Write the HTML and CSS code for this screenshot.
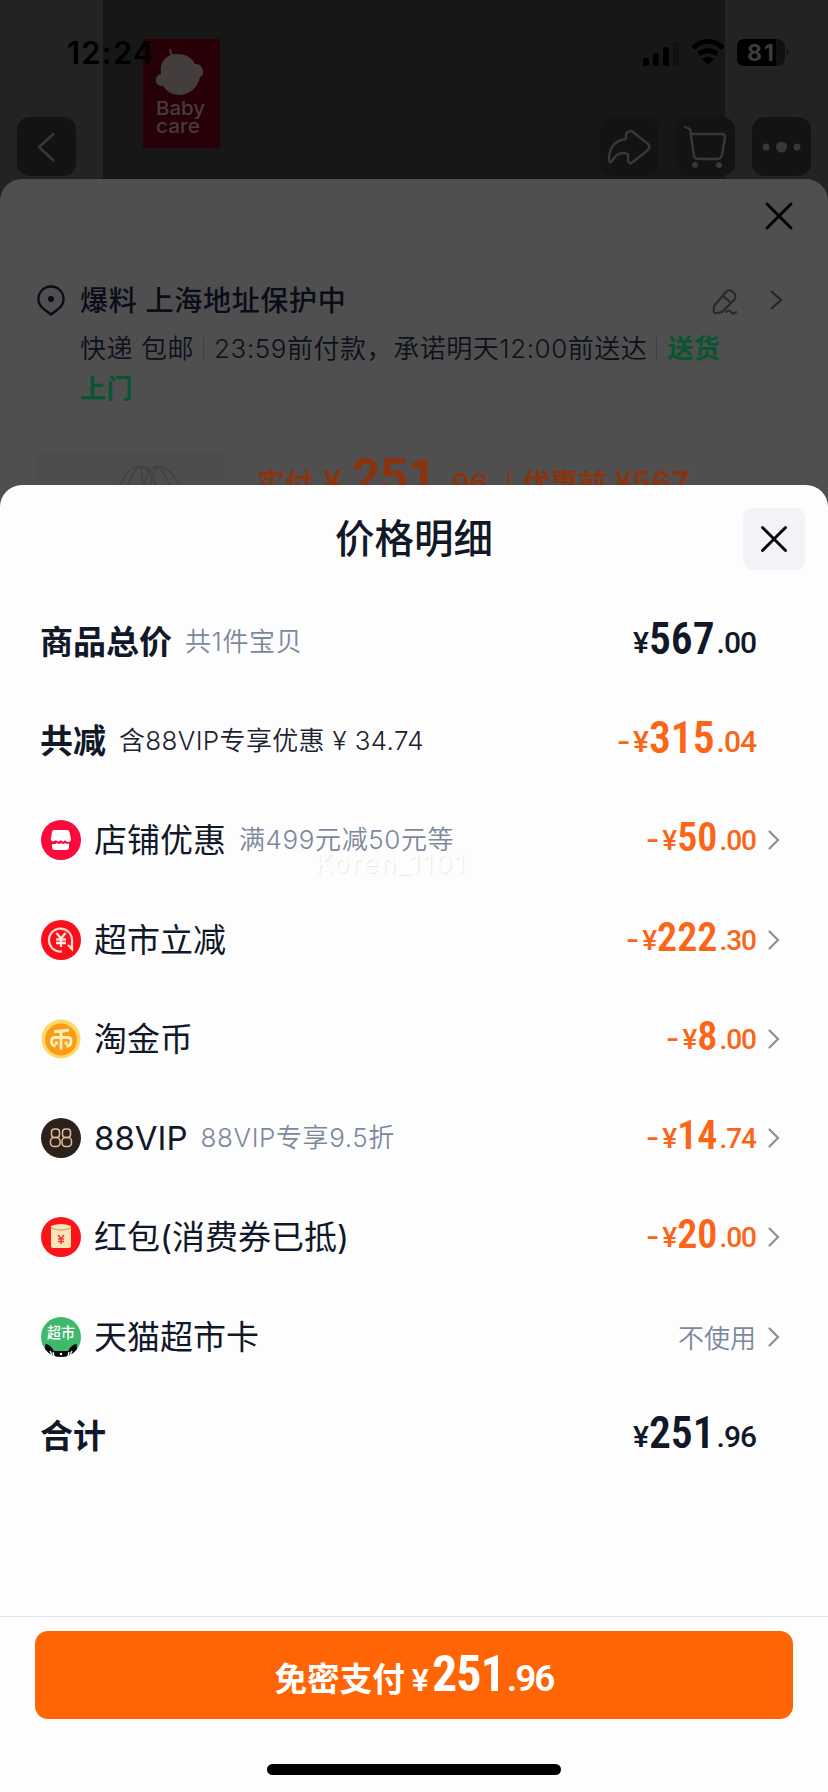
FILE: index.html
```html
<!DOCTYPE html>
<html lang="zh-CN">
<head>
<meta charset="utf-8">
<title>价格明细</title>
<link rel="stylesheet" href="styles.css">
</head>
<body>
<main class="phone">
  <section class="product">
    <div class="photo"></div>
    <div class="brand">
      <svg width="77" height="109" viewBox="0 0 77 109">
        <rect width="77" height="109" fill="#280008"/>
        <path d="M27 10c0 5 3 7 4 10" fill="none" stroke="#433d3d" stroke-width="1.8"/>
        <path d="M24 18C31 13 47 14 52 25C60 24 63 36 57 38C55 51 41 59 30 55C24 53 22 49 20 47C12 48 10 37 18 35C17 27 19 22 24 18Z" fill="#433d3d"/>
        <text class="brand-word" x="13" y="76" textLength="49" lengthAdjust="spacingAndGlyphs">Baby</text>
        <text class="brand-word" x="13" y="94" textLength="44" lengthAdjust="spacingAndGlyphs">care</text>
      </svg>
    </div>
    <header class="status">
      <span class="clock">12:24</span>
      <span class="signals">
        <svg width="36" height="20" viewBox="0 0 36 20"><g fill="#000"><rect y="12" width="6" height="8" rx="1.5"/><rect x="10" y="7" width="6" height="13" rx="1.5"/><rect x="20" y="1" width="6" height="19" rx="1.5"/></g><rect x="30" y="-4" width="6" height="24" rx="1.5" fill="#111"/></svg>
        <svg width="34" height="26" viewBox="0 0 34 26"><g fill="none" stroke="#000" stroke-width="5"><path d="M2 9Q17-4 32 9"/><path d="M8 15Q17 8 26 15"/></g><path d="M11 20Q17 15 23 20L17 26Z"/></svg>
        <svg width="53" height="27" viewBox="0 0 53 27"><rect width="48" height="27" rx="8" fill="#111"/><path d="M8 0H39V27H8Q0 27 0 19V8Q0 0 8 0Z"/><path d="M50 10Q53 13.500 50 17Z" fill="#111"/><text class="battery" x="10" y="22" textLength="27">81</text></svg>
      </span>
    </header>
    <nav class="tools">
      <span class="tool"><svg width="59" height="59" viewBox="0 0 59 59"><path d="M36.500 17L22 30L36.500 43.500"/></svg></span>
      <span class="tool-group">
        <span class="tool"><svg width="59" height="59" viewBox="0 0 59 59"><path d="M29 15Q30 13 33 15L48 27Q51 30 48 33L33 45Q30 48 28 44V37Q18 33 12 44Q9 48 9 41Q10 24 26 22V18Q26 15 29 15Z"/></svg></span>
        <span class="tool"><svg width="59" height="59" viewBox="0 0 59 59"><path d="M9 10L14 12L18 39Q19 42 22 42H42Q45 42 46 38L49 20Q49 17 46 17H17"/><circle class="solid" cx="19" cy="48" r="3"/><circle class="solid" cx="43" cy="48" r="3"/></svg></span>
        <span class="tool"><svg width="59" height="59" viewBox="0 0 59 59"><g class="solid"><circle cx="14" cy="30" r="3.500"/><circle cx="29.500" cy="30" r="5.500"/><circle cx="45" cy="30" r="3.500"/></g></svg></span>
      </span>
    </nav>
  </section>

  <section class="order">
    <svg class="order-close" width="28" height="28" viewBox="0 0 28 28"><path d="M2 2L26 26M26 2L2 26" stroke="#000" stroke-width="2.800" stroke-linecap="round"/></svg>
    <div class="address">
      <svg class="pin" width="28" height="32" viewBox="0 0 28 32"><path d="M8 25Q1 20 1.500 13.500A12.500 12 0 0 1 26.500 13.500Q27 20 20 25L14 29.500Z" fill="none" stroke="#0a0c18" stroke-width="2.300" stroke-linejoin="round"/><circle cx="14" cy="14" r="3" fill="#0a0c18"/></svg>
      <div class="address-body">
        <h2 class="address-name">爆料 上海地址保护中</h2>
        <p class="delivery">快递 包邮<i class="bar"></i>23:59前付款，承诺明天12:00前送达<i class="bar"></i><b>送货</b><br><b>上门</b></p>
      </div>
      <svg class="pen" width="26" height="28" viewBox="0 0 26 28"><g fill="none" stroke="#26272c" stroke-width="2" stroke-linejoin="round" stroke-linecap="round"><path d="M2 18L14 4Q17 1 20 3L22 5Q25 8 22 12L10 24Q8 25 3 25Q1 25 2 18ZM11 8L18 14"/><path d="M14 24Q17 21 19 24T24 24"/></g></svg>
      <svg class="go" width="14" height="22" viewBox="0 0 14 22"><path d="M2 2L12 11L2 20" fill="none" stroke="#26272c" stroke-width="2.300"/></svg>
    </div>
    <div class="goods">
      <div class="thumb"><svg width="72" height="36" viewBox="0 0 72 36"><g fill="none" stroke="#414141" stroke-width="1.500"><path d="M2 36Q10 2 26 2Q40 5 46 36M10 36Q18 5 26 2Q30 12 28 36M29 36Q31 3 44 2Q63 5 70 36M44 2Q34 14 37 36M44 2Q56 13 58 36M26 2Q34 2 37 8"/></g></svg></div>
      <p class="pay"><span>实付</span><span class="pay-yen">¥</span><span class="pay-main">251</span><span class="pay-cents">.96</span><span class="pay-sep">|</span><span>优惠前</span><span class="pay-before">¥567</span></p>
    </div>
  </section>

  <section class="detail">
    <header class="detail-head">
      <h1 class="title">价格明细</h1>
      <span class="close"><svg width="28" height="28" viewBox="0 0 28 28"><path d="M2.500 2.500L25.500 25.500M25.500 2.500L2.500 25.500" stroke="#05070d" stroke-width="3" stroke-linecap="round"/></svg></span>
    </header>
    <div class="rows">
      <div class="row strong"><span class="label">商品总价</span><span class="note">共1件宝贝</span><span class="price"><span class="yen">¥</span><span class="num">567</span><span class="cents">.00</span></span></div>
      <div class="row strong"><span class="label">共减</span><span class="note dark">含88VIP专享优惠 ¥ 34.74</span><span class="price off"><span class="minus">-</span><span class="yen">¥</span><span class="num">315</span><span class="cents">.04</span></span></div>
      <div class="row">
        <svg class="icon" width="40" height="40" viewBox="0 0 40 40"><circle cx="20" cy="20" r="20" fill="#fb0a3b"/><path d="M13 10H26Q28 10 28.500 12L30 19Q30 22 27 22Q25 22 24 20Q22 23 20 20Q17 23 15 20Q13 22 11 21Q9 20 10 18L11 12Q11 10 13 10Z" fill="#fff"/><path d="M11 24Q14 25 16 23Q18 25 20 23Q22 25 24 23Q27 25 28 23V27Q28 30 25 30H14Q11 30 11 27Z" fill="#fff"/></svg>
        <span class="label">店铺优惠</span><span class="note">满499元减50元等</span><span class="price off"><span class="minus">-</span><span class="yen">¥</span><span class="num">50</span><span class="cents">.00</span></span><svg class="arrow" width="12" height="20" viewBox="0 0 12 20"><path d="M1.500 1.500L10 10L1.500 18.500"/></svg>
      </div>
      <div class="row">
        <svg class="icon" width="40" height="40" viewBox="0 0 40 40"><circle cx="20" cy="20" r="20" fill="#fb1019"/><path d="M21 31.500A11.500 11.500 0 1 1 31 20V29L27 25" fill="none" stroke="#ffd9d5" stroke-width="2.200"/><path d="M15.500 13L20 18.500L24.500 13M20 18V27M15 19.500H25M15 23H25" fill="none" stroke="#ffe8df" stroke-width="2.300"/><path d="M26 25L31 30V26Z" fill="#ffe2b0"/></svg>
        <span class="label">超市立减</span><span class="price off"><span class="minus">-</span><span class="yen">¥</span><span class="num">222</span><span class="cents">.30</span></span><svg class="arrow" width="12" height="20" viewBox="0 0 12 20"><path d="M1.500 1.500L10 10L1.500 18.500"/></svg>
      </div>
      <div class="row">
        <svg class="icon" width="40" height="40" viewBox="0 0 40 40"><circle cx="20" cy="20" r="19.500" fill="#ffd866"/><circle cx="20" cy="20.500" r="16" fill="#fc9b17"/><path d="M13 12.500Q20 12.500 28 11M14.500 27Q10 26.500 10.500 21.500Q11 18.500 14 18.500H27Q30.500 18.500 30 23Q29.500 27 25.500 27M15.500 22.500V25.500M25 22.500V25.500M20 13V30.500" fill="none" stroke="#fff0b8" stroke-width="2.900" stroke-linejoin="round"/></svg>
        <span class="label">淘金币</span><span class="price off"><span class="minus">-</span><span class="yen">¥</span><span class="num">8</span><span class="cents">.00</span></span><svg class="arrow" width="12" height="20" viewBox="0 0 12 20"><path d="M1.500 1.500L10 10L1.500 18.500"/></svg>
      </div>
      <div class="row">
        <svg class="icon" width="40" height="40" viewBox="0 0 40 40"><circle cx="20" cy="20" r="20" fill="#2b211d"/><g fill="none" stroke="#e3bd96" stroke-width="1.500"><rect x="10.500" y="11" width="8" height="8.500" rx="3"/><rect x="9.500" y="19.500" width="9.500" height="9" rx="3.500"/><rect x="21.500" y="11" width="8" height="8.500" rx="3"/><rect x="21" y="19.500" width="9.500" height="9" rx="3.500"/></g></svg>
        <span class="label">88VIP</span><span class="note">88VIP专享9.5折</span><span class="price off"><span class="minus">-</span><span class="yen">¥</span><span class="num">14</span><span class="cents">.74</span></span><svg class="arrow" width="12" height="20" viewBox="0 0 12 20"><path d="M1.500 1.500L10 10L1.500 18.500"/></svg>
      </div>
      <div class="row">
        <svg class="icon" width="40" height="40" viewBox="0 0 40 40"><circle cx="20" cy="20" r="20" fill="#fb1519"/><path d="M10 9Q20 5 30 9V29Q30 31 28 31H12Q10 31 10 29Z" fill="#fbe4b6"/><path d="M10 11Q20 15 30 11" fill="none" stroke="#e6a783" stroke-width="1.500"/><path d="M17 18L20 21.500L23 18M20 21V27M17 22H23M17 24.500H23" fill="none" stroke="#ec3c31" stroke-width="1.500"/></svg>
        <span class="label">红包(消费券已抵)</span><span class="price off"><span class="minus">-</span><span class="yen">¥</span><span class="num">20</span><span class="cents">.00</span></span><svg class="arrow" width="12" height="20" viewBox="0 0 12 20"><path d="M1.500 1.500L10 10L1.500 18.500"/></svg>
      </div>
      <div class="row">
        <svg class="icon" width="40" height="40" viewBox="0 0 40 40"><circle cx="20" cy="20" r="20" fill="#3eb86a"/><path d="M4.500 27Q9 27 13 34H27Q31 27 35.500 27L36 32Q30 40 20 40Q10 40 4 32Z" fill="#050807"/><path d="M9 34L11 38M31 34L29 38M12 35L13 39M28 35L27 39" stroke="#fff" stroke-width="1.300"/><circle cx="20" cy="37" r="1.200" fill="#fff"/><text class="market" x="6" y="20.500" textLength="28" lengthAdjust="spacingAndGlyphs">超市</text></svg>
        <span class="label">天猫超市卡</span><span class="unused">不使用</span><svg class="arrow" width="12" height="20" viewBox="0 0 12 20"><path d="M1.500 1.500L10 10L1.500 18.500"/></svg>
      </div>
      <div class="row strong"><span class="label">合计</span><span class="price"><span class="yen">¥</span><span class="num">251</span><span class="cents">.96</span></span></div>
    </div>
    <span class="watermark">Koren_1101</span>
    <footer class="foot">
      <div class="submit"><span class="submit-label">免密支付</span><span class="submit-yen">¥</span><span class="submit-num">251</span><span class="submit-cents">.96</span></div>
      <div class="home"></div>
    </footer>
  </section>
</main>
</body>
</html>
```
FILE: styles.css
```css
* { box-sizing: border-box; }
body { margin: 0; font-family: Inter, "Noto Sans CJK SC", sans-serif; background: #232323; }
h1, h2, p { margin: 0; }
svg { display: block; flex: none; overflow: visible; }
.phone { position: relative; width: 828px; height: 1792px; overflow: hidden; }

.product { position: relative; height: 220px; background: #232323; }
.photo { position: absolute; left: 103px; top: 0; width: 622px; height: 220px; background: #171717; }
.brand { position: absolute; left: 143px; top: 39px; }
.brand-word { font: 500 19px Inter, sans-serif; fill: #443c3c; }
.status { position: relative; display: flex; justify-content: space-between; height: 117px; padding: 34px 38px 0 67px; }
.clock { font-size: 31px; font-weight: 600; line-height: 38px; letter-spacing: 1.2px; color: #000; }
.signals { display: flex; align-items: flex-start; padding-top: 5px; }
.signals svg:nth-child(1) { margin: 7px 12px 0 0; }
.signals svg:nth-child(2) { margin: 0 12px 0 0; }
.battery { font: 700 23px Inter, sans-serif; fill: #3c3c3c; }
.tools { position: relative; display: flex; justify-content: space-between; padding: 0 17px; }
.tool-group { display: flex; gap: 17px; }
.tool { width: 59px; height: 59px; border-radius: 13px; background: #131316; }
.tool path { fill: none; stroke: #38383a; stroke-width: 2.4; stroke-linejoin: round; stroke-linecap: round; }
.tool .solid { fill: #38383a; }

.order { position: absolute; left: 0; top: 179px; width: 828px; height: 330px; overflow: hidden; background: #4f4f4f; border-radius: 22px 22px 0 0; padding: 23px 36px 0 37px; }
.order-close { margin: 0 0 0 728px; }
.address { display: flex; align-items: flex-start; height: 146px; margin-top: 51px; border-bottom: 1px solid #4a4a4b; }
.pin { margin: 4px 15px 0 0; }
.address-body { width: 632px; }
.address-name { font-size: 28px; line-height: 40px; font-weight: 500; letter-spacing: .7px; white-space: nowrap; color: #0a0c18; }
.delivery { margin-top: 8px; font-size: 26px; line-height: 40px; letter-spacing: .55px; white-space: nowrap; color: #0d0f1b; font-weight: 350; }
.delivery b { color: #08552f; font-weight: 600; }
.bar { display: inline-block; width: 1px; height: 23px; margin: 0 10px 0 9px; background: #3e3e42; vertical-align: -2px; }
.pen { margin: 7px 0 0; }
.go { margin: 8px 0 0 31px; }
.goods { display: flex; margin-top: 25px; }
.thumb { width: 194px; height: 60px; border-radius: 12px 12px 0 0; background: #4d4d4d; padding: 12px 0 0 77px; }
.pay { display: flex; align-items: baseline; margin: -4px 0 0 26px; font-size: 28px; line-height: 60px; font-weight: 600; color: #8a330f; white-space: nowrap; }
.pay-yen { font: 600 33px Inter, sans-serif; margin: 0 10px; }
.pay-main { font: 700 50px Roboto, sans-serif; letter-spacing: -.7px; }
.pay-cents { font: 600 29px Inter, sans-serif; margin-left: 7px; }
.pay-sep { font-size: 24px; font-weight: 400; margin: 0 10px 0 16px; }
.pay-before { font: 600 31px Inter, sans-serif; margin-left: 8px; }

.detail { position: absolute; left: 0; top: 485px; width: 828px; height: 1307px; background: #fdfdfe; border-radius: 22px 22px 0 0; color: #111827; }
.detail-head { display: grid; grid-template-columns: 1fr auto 1fr; align-items: center; height: 107px; padding: 0 23px; }
.title { grid-column: 2; font-size: 39.5px; line-height: 58px; font-weight: 500; }
.close { justify-self: end; display: grid; place-items: center; width: 62px; height: 62px; border-radius: 10px; background: #f2f3f7; }
.rows { display: grid; grid-auto-rows: 99.3px; padding: 0 48px 0 41px; }
.row { display: flex; align-items: center; }
.icon { margin-right: 13px; }
.label { font-size: 33px; line-height: 48px; font-weight: 370; white-space: nowrap; }
.strong .label { font-weight: 600; margin-left: -1px; }
.note { margin-left: 13px; font-size: 26px; line-height: 40px; letter-spacing: .6px; font-weight: 350; color: #7c889c; white-space: nowrap; }
.note.dark { color: #1b2230; letter-spacing: .35px; }
.price { display: flex; align-items: baseline; margin-left: auto; padding-bottom: 2px; font-family: Roboto, sans-serif; line-height: 48px; font-weight: 550; }
.num, .submit-num { font-stretch: 75%; }
.row .num { font-size: 40px; font-weight: 650; transform: translateY(1px); }
.row .yen { font-size: 28px; }
.row .cents { font-size: 28px; letter-spacing: -1px; margin: 0 0 0 2px; }
.strong .price { margin-right: 23px; }
.row.strong .num { font-size: 43.5px; }
.row.strong .yen { font-size: 30px; }
.row.strong .cents { font-size: 30px; margin-right: 1px; }
.minus { width: 14px; font-size: 30px; transform: scaleX(1.25); }
.off { color: #fb6518; }
.unused { margin-left: auto; padding-bottom: 1px; font-size: 26px; font-weight: 350; color: #7c889c; }
.arrow { margin-left: 12px; }
.arrow path { fill: none; stroke: #8c8f95; stroke-width: 2.2; stroke-linecap: round; }
.market { font: 500 15px "Noto Sans CJK SC", sans-serif; fill: #fff; }
.watermark { position: absolute; left: 315px; top: 362px; font-size: 26px; line-height: 34px; letter-spacing: 2.3px; color: #fff; text-shadow: 1px 1px 1px #e6e6e8; }

.foot { position: absolute; left: 0; bottom: 0; width: 828px; height: 176px; border-top: 1px solid #e8e6ea; padding: 14px 35px 0; }
.submit { display: flex; align-items: baseline; justify-content: center; height: 88px; border-radius: 13px; background: #ff6505; color: #fff; line-height: 87px; font-family: Roboto, "Noto Sans CJK SC", sans-serif; font-weight: 600; }
.submit-label { font-family: "Noto Sans CJK SC", sans-serif; font-size: 32.6px; font-weight: 600; }
.submit-yen { font-size: 32px; margin: 0 3px 0 7px; }
.submit-num { font-size: 50px; font-weight: 700; letter-spacing: -1px; }
.submit-cents { font-size: 37px; letter-spacing: -2px; margin-left: 2px; }
.home { width: 294px; height: 11px; margin: 45px auto 0; border-radius: 6px; background: #000; }
```
